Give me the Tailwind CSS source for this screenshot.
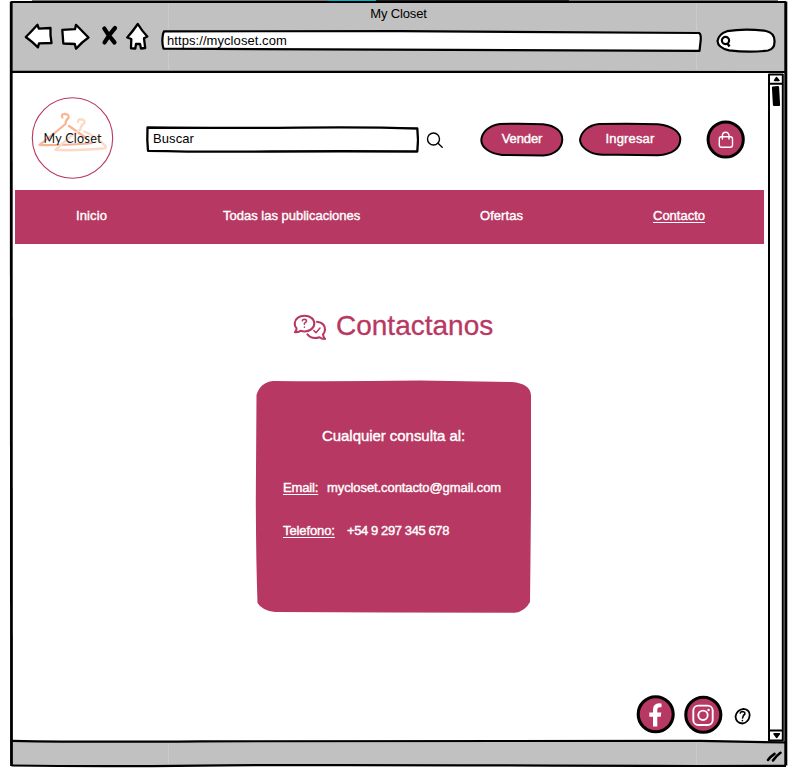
<!DOCTYPE html>
<html lang="es">
<head>
<meta charset="utf-8">
<title>My Closet</title>
<script src="https://cdn.jsdelivr.net/npm/@tailwindcss/browser@4"></script>
</head>
<body class="bg-white">
<div class="relative flex h-[768px] w-[803px] flex-col overflow-hidden bg-white font-['Liberation_Sans',Arial,sans-serif] text-[13px] leading-[16px] text-black">

  <!-- Browser chrome -->
  <header class="ml-[11px] mt-[2px] flex h-[70px] w-[775px] shrink-0 flex-col bg-[#c1c1c1]">
    <h1 class="mt-[4px] h-[16px] text-center tracking-[-0.15px]">My Closet</h1>
    <div class="flex h-[34px] items-start pl-[13px]">
      <svg class="h-[30px] w-[126px] shrink-0" viewBox="24 22 126 30" fill="#fff" stroke="#000" stroke-width="2.3" stroke-linejoin="round">
        <path d="M25.800 37Q31 32 37.500 24.800L38.800 28.700 50.500 28Q50 35 51.500 43L39 43.300 38 47.300Q32 41.500 25.800 37Z"/>
        <path d="M62.300 29.800 75 29.200 76 24.800Q82 31 88.500 37.500 82 42 76 48.700L74.800 44 63.300 43.500Z"/>
        <path d="M137.800 24Q142 31 147.300 36.500L144 38.300 145.200 48 141 48.500 140 44H136L135.300 48.500 131 48.300 131.300 39 127.200 37.500Q133 31 137.800 24Z"/>
        <path d="M104.300 28.500Q108 35 114.500 42.500M115 28Q109.500 34 104.500 42.500" fill="none" stroke-width="4.200" stroke-linecap="round"/>
      </svg>
      <div class="relative ml-[11px] mt-[8px] h-[22px] w-[541px] shrink-0">
        <svg class="absolute inset-0 h-full w-full" viewBox="161 30 541 22" fill="#fff" stroke="#000" stroke-width="2.2" stroke-linejoin="round">
          <path d="M164 31.300Q300 30.800 400 31.200T699 33Q701.500 34 700.500 42L699.500 50.800Q560 50.500 450 49.800T163.500 48.700Q161.500 43 163 34Z"/>
        </svg>
        <span class="relative block pl-[6px] pt-[3px] tracking-[0.07px]">https://mycloset.com</span>
      </div>
      <svg class="ml-[14px] mt-[6px] h-[26px] w-[60px] shrink-0" viewBox="716 28 60 26" fill="#fff" stroke="#000" stroke-width="2.2">
        <path d="M727 31.200Q745 28 766 31Q775 33 774.500 42Q774.500 49 768 50.500Q750 53 729 50.300Q718 48 717.500 41Q718.500 34 727 31.200Z"/>
        <circle cx="725.500" cy="40.500" r="3.600"/>
        <path d="M727.500 43.500 729.500 46.500" stroke-width="2.400"/>
      </svg>
    </div>
  </header>

  <!-- Viewport -->
  <main class="ml-[15px] flex h-[669px] w-[749px] shrink-0 flex-col">
    <div class="flex h-[118px] shrink-0 items-start pl-[16px]">
      <svg class="mt-[25px] h-[82px] w-[84px] shrink-0" viewBox="31 97 84 82" fill="none">
        <circle cx="72.500" cy="138" r="40.200" stroke="#b73862" stroke-width="1.100"/>
        <g stroke-linecap="round" stroke-linejoin="round">
          <path d="M62.500 117.500Q60.500 114.500 64.500 113.800Q69.500 114 68.500 118Q65.500 120 65.500 124Q54 134 39.500 144.800Q49 146 89 143.500L92 143M69 126Q78 132 86 138" stroke="#f9b494" stroke-width="2.200"/>
          <path d="M78 122Q77.500 119.300 81 119.200Q85 119.700 84.500 123Q80.500 125.500 80.500 129.500Q69 137 55.500 149.800Q70 151 103 148.500Q108 148 104 144.500Q96 136.500 84.500 131.500" stroke="#fbdac7" stroke-width="2.400"/>
        </g>
        <text x="43.500" y="143" textLength="58" lengthAdjust="spacing" font-family="Lato, sans-serif" font-size="12.500" fill="#111">My Closet</text>
      </svg>
      <div class="relative ml-[31px] mt-[53px] h-[28px] w-[273px] shrink-0">
        <svg class="absolute inset-0 h-full w-full" viewBox="146 125 273 28" fill="#fff" stroke="#000" stroke-width="2.300" stroke-linejoin="round">
          <path d="M147.500 127.500Q230 128.300 300 127.600T417.300 128.500L418 140 417.300 151.500Q340 151 270 151.500T148 150.800L147.300 140Z"/>
        </svg>
        <span class="relative block pl-[7px] pt-[6px] tracking-[0.08px]">Buscar</span>
      </div>
      <svg class="ml-[7px] mt-[59px] h-[18px] w-[18px] shrink-0" viewBox="426 131 18 18" fill="none" stroke="#000" stroke-width="1.400" stroke-linecap="round">
        <circle cx="433.500" cy="139" r="6"/><path d="M438 143.300 442.200 147.300"/>
      </svg>
      <button class="relative ml-[36px] mt-[49px] block h-[36px] w-[84px] shrink-0 text-white">
        <svg class="absolute inset-0 h-full w-full" viewBox="480 121 84 36" fill="#b73862" stroke="#000" stroke-width="2">
          <path d="M500 124Q520 123.200 543 124.200C556 125.500 562.300 132 562.300 139.500C562 148 555 155 543 155.500Q520 155.300 502 155C489 153.500 481.300 147 481.300 140C482 132 489 125.500 500 124Z"/>
        </svg>
        <span class="relative block pb-[1px] tracking-[-0.1px] [-webkit-text-stroke:0.4px]">Vender</span>
      </button>
      <button class="relative ml-[14px] mt-[49px] block h-[36px] w-[104px] shrink-0 text-white">
        <svg class="absolute inset-0 h-full w-full" viewBox="578 121 104 36" fill="#b73862" stroke="#000" stroke-width="2">
          <path d="M599 124Q635 123.300 658 124.300C673 126 680.300 132 680.300 139.500C680 148 673 154.500 658 155.300Q630 154.500 602 154.800C589 154 580.500 147 580 140C581 132 588 125 599 124Z"/>
        </svg>
        <span class="relative block pb-[1px] tracking-[0.15px] [-webkit-text-stroke:0.4px]">Ingresar</span>
      </button>
      <svg class="ml-[24px] mt-[48px] h-[40px] w-[40px] shrink-0" viewBox="706 120 40 40" fill="none">
        <circle cx="725.700" cy="139.500" r="17.600" fill="#b73862" stroke="#000" stroke-width="3"/>
        <g stroke="#fff" stroke-width="1.400" stroke-linecap="round" stroke-linejoin="round">
          <path d="M721 136.800H730.500Q732.500 136.800 732.500 139V145Q732.500 147.300 730.300 147.300H721.500Q719.300 147.300 719.300 145V139Q719.300 136.800 721 136.800Z"/>
          <path d="M722.400 139V135.500A3.300 3.300 0 0 1 729 135.500V139"/>
        </g>
      </svg>
    </div>

    <nav class="flex h-[54px] shrink-0 items-start bg-[#b73862] pt-[18px] text-white [-webkit-text-stroke:0.4px]">
      <a class="ml-[61px] w-[147px] tracking-[0.12px]">Inicio</a>
      <a class="w-[257px]">Todas las publicaciones</a>
      <a class="w-[173px] tracking-[0.05px]">Ofertas</a>
      <a class="underline decoration-1 underline-offset-2">Contacto</a>
    </nav>

    <section class="flex flex-1 flex-col items-start">
      <div class="ml-[278px] mt-[64px] flex h-[36px] items-center text-[#b73862]">
        <svg class="mt-[2px] h-[28px] w-[34px] shrink-0" viewBox="293 313 34 28" fill="none" stroke="#b73862" stroke-width="2.100" stroke-linejoin="round" stroke-linecap="round">
          <path d="M295 332.300Q297 330 296.500 328.300Q294.500 326 294.700 323.200C295.200 318.500 299.500 315.700 304.500 315.700C310 315.700 314.300 319 314.300 323.500C314.300 328 310 331.500 304.500 331.500Q302.500 331.500 300.500 330.800Q298 332.500 295 332.300Z"/>
          <path d="M317 321.800C322 322.500 325 325.500 325 329.500Q325 332 323 334.500Q323.200 336.800 325 339Q321.500 339 319.500 337.200C314.500 338.800 310 337.500 307.500 334.300"/>
          <path d="M302.300 320.800Q302.500 319.300 304.400 319.300Q306.600 319.500 306.500 321.200Q306.300 322.500 304.400 323.200V324.200M304.400 327V327.200" stroke-width="1.500"/>
          <path d="M313.800 330.500 316 332.700 320 328" stroke-width="1.500"/>
        </svg>
        <h2 class="ml-[9px] text-[28px] leading-[36px] [-webkit-text-stroke:0.3px]">Contactanos</h2>
      </div>
      <div class="relative ml-[240px] mt-[36px] h-[233px] w-[277px] shrink-0 text-white">
        <svg class="absolute inset-0 h-full w-full" viewBox="255 380 277 233" fill="#b73862">
          <path d="M273 381Q340 381.500 420 380.600L512 382Q530 383.500 531 395V500Q530.500 560 530 602Q525 611.500 515 612.700Q390 612.500 275 612Q262 610.500 257.500 603Q256 560 255.800 500L256.500 395Q260 382.500 273 381Z"/>
        </svg>
        <div class="relative pl-[28px] pt-[47px] [-webkit-text-stroke:0.4px]">
          <p class="ml-[39px] text-[15px] leading-[18px] tracking-[-0.05px]">Cualquier consulta al:</p>
          <p class="mt-[35px] flex h-[16px]"><span class="w-[44px] tracking-[-0.15px] underline decoration-1 underline-offset-2">Email:</span><span class="tracking-[-0.09px]">mycloset.contacto@gmail.com</span></p>
          <p class="mt-[27px] flex h-[16px]"><span class="w-[64px] tracking-[-0.1px] underline decoration-1 underline-offset-2">Telefono:</span><span class="tracking-[-0.4px]">+54 9 297 345 678</span></p>
        </div>
      </div>
      <div class="ml-[621px] mt-[81px] flex items-center">
        <svg class="h-[40px] w-[40px]" viewBox="636 695 40 40">
          <circle cx="655.700" cy="714.300" r="17.500" fill="#b73862" stroke="#000" stroke-width="3.100"/>
          <path d="M653 726.500V716.800H649.300V712.500H653V709.500Q653.200 703.500 659 703.300L661.500 703.500V707.200H659.700Q657.300 707.200 657.300 709.500V712.500H661.300L660.700 716.800H657.300V726.500Z" fill="#fff"/>
        </svg>
        <svg class="ml-[7px] mt-[1px] h-[40px] w-[40px]" viewBox="683 695 40 40" fill="none">
          <circle cx="703.300" cy="714.800" r="17.500" fill="#b73862" stroke="#000" stroke-width="3.100"/>
          <rect x="693.300" y="705.600" width="19.400" height="19.400" rx="5" stroke="#fff" stroke-width="1.900"/>
          <circle cx="703" cy="715.300" r="4.700" stroke="#fff" stroke-width="1.900"/>
          <circle cx="708.600" cy="710" r="1.200" fill="#fff"/>
        </svg>
        <svg class="ml-[11px] mt-[2px] h-[18px] w-[18px]" viewBox="734 706 18 18" fill="none" stroke="#000" stroke-width="1.800" stroke-linecap="round">
          <path d="M743.500 707.800Q749.700 708.500 749.700 714Q749 721.500 742.500 722.500Q736 722 735.500 715.500Q736.500 709 743.500 707.800Z"/>
          <path d="M740.300 712Q740.700 710.500 742.700 710.500Q745.200 710.900 744.800 713Q742.800 714.500 742.600 717M742.400 719.600V719.800" stroke-width="1.600"/>
        </svg>
      </div>
    </section>
  </main>

  <!-- Status bar -->
  <footer class="ml-[11px] h-[25px] w-[775px] shrink-0 bg-[#c1c1c1]"></footer>

  <!-- Hand-drawn window frame and scrollbar -->
  <svg class="pointer-events-none absolute inset-0 h-[768px] w-[803px]" viewBox="0 0 803 768" fill="none" stroke="#000" stroke-width="2.200" stroke-linejoin="round">
    <path d="M32 .5H376" stroke="#777" stroke-width="1"/>
    <path d="M376 .5H569" stroke="#222" stroke-width="1"/>
    <path d="M569 .5H778" stroke="#777" stroke-width="1"/>
    <path d="M328 .5H376" stroke="#00b7c8" stroke-width="1"/>
    <path d="M168.500 3V29M168.500 52V70M696.500 3V31M696.500 53V70M168.500 743V764M696.500 743V764" stroke="#cbcbcb" stroke-width="1"/>
    <path d="M11 2H786"/>
    <path d="M11.200 1.500Q10.800 380 11.500 766" stroke-width="2.800"/>
    <path d="M785.800 1.500V765.500" stroke-width="3"/>
    <path d="M12 71.800Q200 72.500 400 71.800T786 72"/>
    <path d="M12 740.800Q90 742.300 200 741.300T700 740.800L786 742.500"/>
    <path d="M11.500 765.500Q100 766.800 200 765.600T700 766L786 765.800"/>
    <path d="M769 74.500H782.800V740.500H769Z" fill="#fff" stroke-width="2"/>
    <path d="M769 83.800H783M769 730.500H783" stroke-width="2"/>
    <path d="M776.500 77.500 779 80.500H774.500ZM774 733.800H779.500L776.700 737.500Z" fill="#000" stroke-width="1.400"/>
    <path d="M773 87.500 778 87 779 105 774 105Z" fill="#000"/>
    <path d="M768 760Q771 756 774.500 753.800M773 760.500Q776 756 780.500 752.800" stroke-width="2.600" stroke-linecap="round"/>
  </svg>
</div>
</body>
</html>
